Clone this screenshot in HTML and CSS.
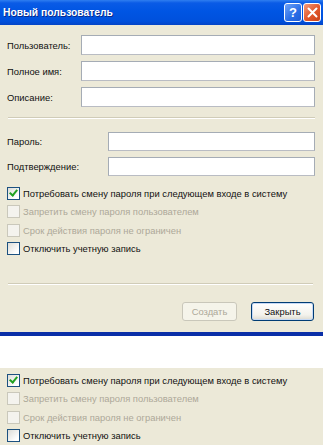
FILE: index.html
```html
<!DOCTYPE html>
<html lang="ru">
<head>
    <meta charset="UTF-8">
    <title>Новый пользователь</title>
    <link rel="stylesheet" href="styles.css">
</head>
<body>

<div class="window">
  <div class="titlebar">
    <span class="title">Новый пользователь</span>
    <div class="title-buttons">
      <span class="tbtn help">?</span>
      <span class="tbtn close">
        <svg width="11" height="11" viewBox="0 0 11 11"><path d="M1.5 1.5 L9.5 9.5 M9.5 1.5 L1.5 9.5" stroke="#fff" stroke-width="2" stroke-linecap="round"/></svg>
      </span>
    </div>
  </div>

  <div class="content">
    <!-- Данные пользователя -->
    <div class="fields">
      <label>Пользователь:</label><input type="text">
      <label>Полное имя:</label><input type="text">
      <label>Описание:</label><input type="text">
    </div>

    <div class="sep first"></div>

    <!-- Пароль -->
    <div class="fields pass">
      <label>Пароль:</label><input type="password">
      <label>Подтверждение:</label><input type="password">
    </div>

    <div class="checks">
      <div class="check"><span class="box checked"></span>Потребовать смену пароля при следующем входе в систему</div>
      <div class="check disabled"><span class="box"></span>Запретить смену пароля пользователем</div>
      <div class="check disabled"><span class="box"></span>Срок действия пароля не ограничен</div>
      <div class="check"><span class="box"></span>Отключить учетную запись</div>
    </div>

    <div class="sep second"></div>

    <div class="buttons">
      <span class="btn disabled">Создать</span>
      <span class="btn default">Закрыть</span>
    </div>
  </div>
</div>

<div class="gap"></div>

<div class="checks copy">
  <div class="check"><span class="box checked"></span>Потребовать смену пароля при следующем входе в систему</div>
  <div class="check disabled"><span class="box"></span>Запретить смену пароля пользователем</div>
  <div class="check disabled"><span class="box"></span>Срок действия пароля не ограничен</div>
  <div class="check"><span class="box"></span>Отключить учетную запись</div>
</div>

</body>
</html>
```

FILE: styles.css
```css
body {
    margin: 0;
    background: #fff;
    font-family: 'Liberation Sans', Arial, sans-serif;
    font-size: 9.4px;
    color: #111;
    width: 323px;
    height: 445px;
    overflow: hidden;
}
.window {
    background: #ece9d8;
    border-bottom: 4px solid #0a2fa8;
}
.titlebar {
    height: 25px;
    display: flex;
    align-items: center;
    justify-content: space-between;
    background: linear-gradient(#2f7ef0 0, #0a5be6 3px, #0055e3 45%, #0050dc 85%, #0444c6 100%);
    padding: 0 2px 0 3px;
}
.title {
    color: #fff;
    font-weight: bold;
    font-size: 10.3px;
    text-shadow: 1px 1px 0 #0a2a8a;
}
.title-buttons {
    display: flex;
    gap: 1px;
}
.tbtn {
    width: 18px;
    height: 19px;
    box-sizing: border-box;
    border: 1px solid #fff;
    border-radius: 3px;
    display: flex;
    align-items: center;
    justify-content: center;
}
.help {
    background: linear-gradient(135deg, #6fa2f8, #2a6ee6 60%, #1f5bd6);
    color: #fff;
    font-weight: bold;
    font-size: 13px;
}
.close {
    background: linear-gradient(135deg, #f49a7a, #e2572b 55%, #c94218);
}
.content {
    padding: 10px 8px 11px 7px;
}
.fields {
    display: grid;
    grid-template-columns: 74px 1fr;
    row-gap: 6px;
    align-items: center;
}
.fields.pass {
    grid-template-columns: 101px 1fr;
    row-gap: 6px;
}
.fields input {
    height: 20px;
    box-sizing: border-box;
    border: 1px solid #a5acb5;
    border-bottom-color: #b9bcc3;
    background: #fff;
    margin: 0;
    font: inherit;
}
.fields.pass input {
    height: 19px;
}
.sep {
    border-top: 1px solid #d0ccb8;
    border-bottom: 1px solid #fff;
    margin-left: 1px;
}
.sep.first {
    margin-top: 10px;
    margin-bottom: 13px;
}
.sep.second {
    margin-top: 25px;
    margin-bottom: 17px;
    margin-right: 2px;
}
.checks {
    margin-top: 8px;
}
.check {
    height: 18.5px;
    display: flex;
    align-items: center;
    white-space: nowrap;
}
.box {
    width: 11px;
    height: 11px;
    border: 1px solid #1c5180;
    background: linear-gradient(135deg, #dcdcd7, #fff 80%);
    margin-right: 3px;
    position: relative;
    flex: none;
}
.box.checked::after {
    content: "";
    position: absolute;
    left: 3px;
    top: 0px;
    width: 3px;
    height: 6px;
    border: solid #21a121;
    border-width: 0 2px 2px 0;
    transform: rotate(40deg);
}
.check.disabled {
    color: #aca899;
}
.check.disabled .box {
    border-color: #cac8bb;
    background: #f4f3ee;
}
.buttons {
    display: flex;
    justify-content: flex-end;
    gap: 14px;
    margin-right: 1px;
}
.btn {
    height: 19px;
    box-sizing: border-box;
    border: 1px solid #003c74;
    border-radius: 3px;
    background: linear-gradient(#fff, #f3f2ec 70%, #dcdad0);
    display: flex;
    align-items: center;
    justify-content: center;
    width: 63px;
}
.btn.disabled {
    width: 55px;
    border-color: #c9c7ba;
    background: #f5f4ea;
    color: #aca899;
}
.btn.default {
    box-shadow: inset 0 0 0 1px #c6d9f5;
}
.gap {
    height: 32px;
}
.checks.copy {
    margin-top: 0;
    background: #ece9d8;
    padding: 3px 7px 0;
    height: 74px;
}
```
